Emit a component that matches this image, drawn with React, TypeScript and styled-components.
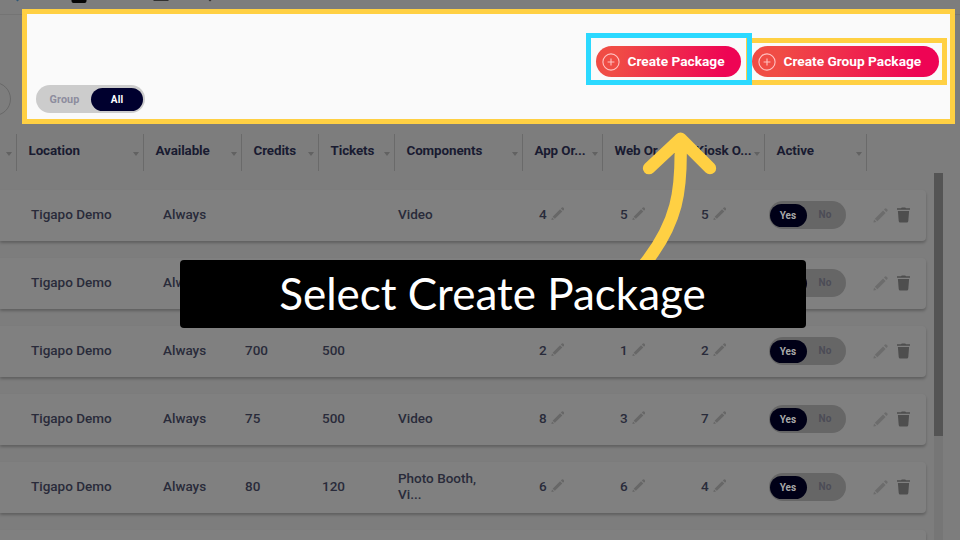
import React from 'react';
import styled, { createGlobalStyle } from 'styled-components';

const GlobalStyle = createGlobalStyle`
  * { box-sizing: border-box; }
  html, body { margin: 0; padding: 0; background: #7d7d7d; }
  body { width: 960px; height: 540px; overflow: hidden; font-family: Roboto, "Liberation Sans", sans-serif; }
`;

const Page = styled.div`
  position: relative;
  width: 960px;
  height: 540px;
  overflow: hidden;
  display: flex;
  flex-direction: column;
  background: #7d7d7d;
`;

const TopBar = styled.div`
  height: 15px;
  flex: none;
  border-bottom: 1px solid #747474;
`;

const TopBarMarks = styled.svg`
  display: block;
`;

const Toolbar = styled.div`
  height: 119px;
  flex: none;
  padding-top: 67px;
`;

const SearchEdge = styled.div`
  width: 60px;
  height: 34px;
  margin-left: -49px;
  border: 1px solid #686868;
  border-radius: 17px;
`;

const HeaderRow = styled.div`
  display: grid;
  grid-template-columns: 16.5px 127px 98px 77px 76px 128px 80px 81px 81px 102px;
  height: 37px;
  flex: none;
`;

const HeaderCell = styled.div`
  display: flex;
  align-items: center;
  justify-content: space-between;
  padding: 0 3.5px 4px 12px;
  border-right: 1px solid #6a6a6a;
  color: #191b31;
  font-size: 13.4px;
  font-weight: 700;
  letter-spacing: -0.1px;
  white-space: nowrap;

  &:first-child { padding-left: 0; }
`;

const SortArrow = styled.i`
  width: 0;
  height: 0;
  flex: none;
  margin-top: 7px;
  margin-left: auto;
  border: 3.5px solid transparent;
  border-top: 4px solid #626262;
  border-bottom: 0;
`;

const Body = styled.div`
  display: flex;
  flex: 1;
  min-height: 0;
  padding-top: 2px;
`;

const Rows = styled.div`
  display: flex;
  flex-direction: column;
  gap: 17px;
  width: 926px;
  flex: none;
  padding-top: 17px;
`;

const Row = styled.div`
  display: grid;
  grid-template-columns: 132px 82px 77px 76px 141px 81px 81px 67.5px 104px 24px 16px;
  align-items: center;
  height: 51px;
  flex: none;
  padding: 0 0 1px 31px;
  background: #808080;
  border-radius: 0 4px 4px 0;
  box-shadow: 0 2px 3px rgba(0, 0, 0, 0.24);
  color: #292b3a;
  font-size: 13.5px;
  font-weight: 500;
  line-height: 16px;
`;

const Cell = styled.div<{ $width?: number }>`
  display: flex;
  align-items: center;
  gap: 4px;
  width: ${(p) => (p.$width ? `${p.$width}px` : 'auto')};
  padding-bottom: 2px;
`;

const Track = styled.div<{ $wide?: boolean }>`
  display: flex;
  align-items: center;
  width: ${(p) => (p.$wide ? 109 : 77)}px;
  height: 28px;
  padding: ${(p) => (p.$wide ? '0 2px 0 0' : '0 0 0 1px')};
  border-radius: 14px;
  background: ${(p) => (p.$wide ? '#ccc' : '#666')};
  font-size: 10px;
  font-weight: 700;
  letter-spacing: 0.1px;
`;

const Thumb = styled.span<{ $wide?: boolean }>`
  width: ${(p) => (p.$wide ? 52 : 37)}px;
  height: 23px;
  border-radius: 12px;
  background: ${(p) => (p.$wide ? '#00002e' : '#000017')};
  color: ${(p) => (p.$wide ? '#fff' : '#a8a8a8')};
  line-height: 23.5px;
  text-align: center;
`;

const OffLabel = styled.span<{ $wide?: boolean }>`
  flex: 1;
  color: ${(p) => (p.$wide ? '#8d8d9e' : '#4c4c56')};
  font-size: ${(p) => (p.$wide ? 10.8 : 10)}px;
  text-align: center;
  padding: ${(p) => (p.$wide ? '0 0 0 2px' : '0 2px 0 0')};
`;

const ScrollTrack = styled.div`
  width: 9px;
  margin-left: 8px;
  background: #767676;
`;

const ScrollThumb = styled.div`
  height: 263px;
  background: #545454;
`;

const HighlightPanel = styled.section`
  position: absolute;
  left: 22px;
  top: 9px;
  width: 933px;
  height: 115px;
  border: 5px solid #ffd043;
  background: #fafafa;
`;

const ToggleSlot = styled.div`
  position: absolute;
  left: 9px;
  top: 71px;
`;

const Frame = styled.div<{ $cyan?: boolean }>`
  position: absolute;
  display: flex;
  top: ${(p) => (p.$cyan ? 33 : 37.5)}px;
  left: ${(p) => (p.$cyan ? 586 : 746)}px;
  width: ${(p) => (p.$cyan ? 166 : 200.5)}px;
  height: ${(p) => (p.$cyan ? 52 : 47.5)}px;
  padding: ${(p) => (p.$cyan ? '8px 0 0 4.5px' : '3.5px 0 0 0.5px')};
  border: 5px solid ${(p) => (p.$cyan ? '#2bd9ff' : '#ffd043')};
`;

const ActionButton = styled.button<{ $width: number }>`
  display: flex;
  align-items: center;
  gap: 8px;
  width: ${(p) => p.$width}px;
  height: 31px;
  flex: none;
  padding: 0 0 0 6px;
  border: 0;
  border-radius: 16px;
  background: linear-gradient(100deg, #f04c45 15%, #ee0454 88%);
  color: #fff;
  font: 700 13.7px/16px Roboto, sans-serif;
  white-space: nowrap;
`;

const ButtonLabel = styled.span`
  padding-bottom: 2px;
`;

const Arrow = styled.svg`
  position: absolute;
  left: 630px;
  top: 125px;
`;

const Caption = styled.div`
  position: absolute;
  left: 179.5px;
  top: 260px;
  width: 626px;
  height: 67.5px;
  border-radius: 4px;
  background: #000;
  color: #fff;
  font: 400 44px/66px Lato, sans-serif;
  text-align: center;
  white-space: nowrap;
`;

const Pencil = ({ size = 13.5, color = '#676767' }) => (
  <svg width={size} height={size} viewBox="0 0 14 14" fill={color}>
    <path d="M0.4 13.6 1 10.8 3.2 13Z" />
    <path d="M1.7 10 9.4 2.3 11.7 4.6 4 12.3Z" />
    <path d="M10.2 1.5 11.3.5Q12 0 12.7.6L13.4 1.3Q14 2 13.5 2.7L12.5 3.8Z" />
  </svg>
);

const Trash = () => (
  <svg width="13" height="16" viewBox="0 0 13 16" fill="#4e4e4e">
    <path d="M0 1.3H4L4.8.4H8.2L9 1.3H13V2.7H0Z" />
    <path d="M.9 4H12.1L11.3 14Q11.2 15.5 9.8 15.5H3.2Q1.8 15.5 1.7 14Z" />
  </svg>
);

const PlusCircle = () => (
  <svg width="18" height="18" viewBox="0 0 18 18" fill="none" stroke="#ffc2c2" strokeWidth="1.1">
    <circle cx="9" cy="9" r="8.1" />
    <path d="M9 5.6V12.4M5.6 9H12.4" />
  </svg>
);

const headers = ['', 'Location', 'Available', 'Credits', 'Tickets', 'Components', 'App Or...', 'Web Or...', 'Kiosk O...', 'Active'];

const rows = [
  ['', '', 'Video', '4', '5', '5'],
  ['', '', '', '', '', ''],
  ['700', '500', '', '2', '1', '2'],
  ['75', '500', 'Video', '8', '3', '7'],
  ['80', '120', 'Photo Booth, Vi...', '6', '6', '4'],
];

const PackageRow = ({ data }: { data: string[] }) => (
  <Row>
    <Cell>Tigapo Demo</Cell>
    <Cell>Always</Cell>
    <Cell>{data[0]}</Cell>
    <Cell>{data[1]}</Cell>
    <Cell $width={90}>{data[2]}</Cell>
    {data.slice(3).map((n, i) => (
      <Cell key={i}>{n}{n && <Pencil />}</Cell>
    ))}
    <Track><Thumb>Yes</Thumb><OffLabel>No</OffLabel></Track>
    <Pencil size={15} color="#6c6c6c" />
    <Trash />
  </Row>
);

export default function App() {
  return (
    <Page>
      <GlobalStyle />
      <TopBar>
        <TopBarMarks width="240" height="5">
          <path d="M16 0H19L17.5 1.6Z" fill="#2e5878" />
          <path d="M71.5 0H86.5V1Q86.5 3 84.5 3H73.5Q71.5 3 71.5 1Z" fill="#050505" />
          <path d="M153.5 0H168.5V1H153.5ZM208.5 0H211.5L210 1.5Z" fill="#303030" />
        </TopBarMarks>
      </TopBar>
      <Toolbar><SearchEdge /></Toolbar>
      <HeaderRow>
        {headers.map((h, i) => (
          <HeaderCell key={i}>{h}<SortArrow /></HeaderCell>
        ))}
      </HeaderRow>
      <Body>
        <Rows>
          {rows.map((r, i) => <PackageRow key={i} data={r} />)}
          <Row />
        </Rows>
        <ScrollTrack><ScrollThumb /></ScrollTrack>
      </Body>
      <HighlightPanel>
        <ToggleSlot>
          <Track $wide><OffLabel $wide>Group</OffLabel><Thumb $wide>All</Thumb></Track>
        </ToggleSlot>
      </HighlightPanel>
      <Frame><ActionButton $width={187}><PlusCircle /><ButtonLabel>Create Group Package</ButtonLabel></ActionButton></Frame>
      <Frame $cyan><ActionButton $width={145.5}><PlusCircle /><ButtonLabel>Create Package</ButtonLabel></ActionButton></Frame>
      <Arrow width="95" height="140" viewBox="630 125 95 140" fill="none" stroke="#ffd043" strokeWidth="12.3" strokeLinecap="round" strokeLinejoin="round">
        <path d="M649 168.2 680.5 138.7 710 168.2M680.5 140C682 190 678 223 643 266" />
      </Arrow>
      <Caption>Select Create Package</Caption>
    </Page>
  );
}
